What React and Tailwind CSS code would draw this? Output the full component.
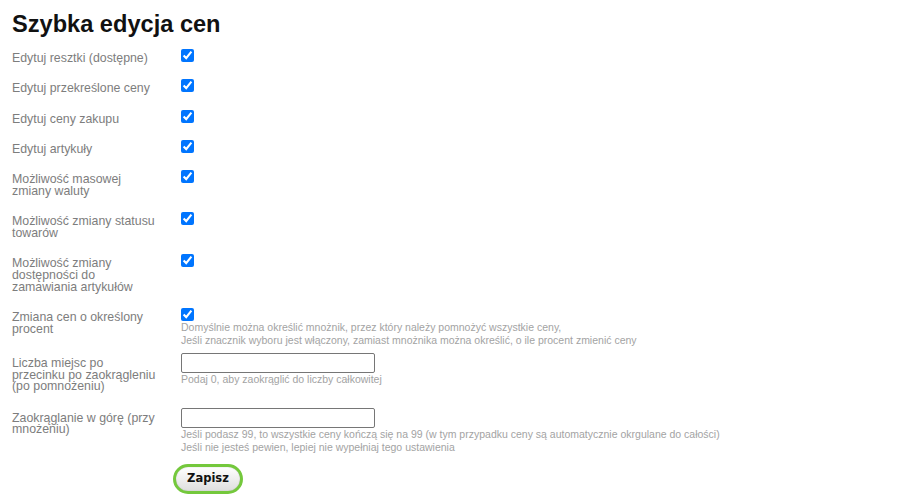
import React from "react";

// ustawienia z checkboxami
const checkRows = [
  { label: "Edytuj resztki (dostępne)" },
  { label: "Edytuj przekreślone ceny" },
  { label: "Edytuj ceny zakupu" },
  { label: "Edytuj artykuły" },
  { label: "Możliwość masowej zmiany waluty" },
  { label: "Możliwość zmiany statusu towarów" },
  { label: "Możliwość zmiany dostępności do zamawiania artykułów" },
  {
    label: "Zmiana cen o określony procent",
    hints: [
      "Domyślnie można określić mnożnik, przez który należy pomnożyć wszystkie ceny,",
      "Jeśli znacznik wyboru jest włączony, zamiast mnożnika można określić, o ile procent zmienić ceny",
    ],
  },
];

const inputRows = [
  {
    label: "Liczba miejsc po przecinku po zaokrągleniu (po pomnożeniu)",
    hints: ["Podaj 0, aby zaokrąglić do liczby całkowitej"],
  },
  {
    label: "Zaokrąglanie w górę (przy mnożeniu)",
    hints: [
      "Jeśli podasz 99, to wszystkie ceny kończą się na 99 (w tym przypadku ceny są automatycznie okrgulane do całości)",
      "Jeśli nie jesteś pewien, lepiej nie wypełniaj tego ustawienia",
    ],
  },
];

const Hints = ({ hints }) =>
  hints ? (
    <div className="text-[10.5px] leading-[13px] text-[#a3a3a3] whitespace-nowrap">
      {hints.map((h, i) => (
        <div key={i}>{h}</div>
      ))}
    </div>
  ) : null;

const Row = ({ label, pt, children }) => (
  <div className="flex items-start">
    <div
      className={`w-[169px] shrink-0 pr-[24px] pb-[14.6px] text-[12.35px] leading-[11.7px] text-[#7d7d7d] ${pt}`}
    >
      {label}
    </div>
    <div className="pb-[6px]">{children}</div>
  </div>
);

const App = () => {
  return (
    <div className="min-h-screen bg-white px-[12px] pt-[10px] font-['Liberation_Sans',Arial,sans-serif]">
      <h1 className="mb-[11px] text-[23.6px] leading-[28px] font-bold text-[#111]">
        Szybka edycja cen
      </h1>

      {checkRows.map((row, i) => (
        <Row key={i} label={row.label} pt="pt-[4px]">
          <input type="checkbox" defaultChecked className="m-0 block h-[13px] w-[13px]" />
          <Hints hints={row.hints} />
        </Row>
      ))}

      {inputRows.map((row, i) => (
        <Row key={i} label={row.label} pt="pt-[5px]">
          <input
            type="text"
            className="block h-[20px] w-[194px] rounded-[2px] border border-[#767676] bg-white px-[2px] text-[13px]"
          />
          <Hints hints={row.hints} />
        </Row>
      ))}

      <div className="pt-[4px] pl-[161px]">
        <button className="h-[30px] w-[70px] rounded-full border-[3px] border-[#74c83c] bg-linear-to-b from-white to-[#dedede] font-['DejaVu_Sans',sans-serif] text-[11.5px] font-bold text-[#111] shadow-[inset_0_0_1px_#999]">
          Zapisz
        </button>
      </div>
    </div>
  );
};

export default App;
